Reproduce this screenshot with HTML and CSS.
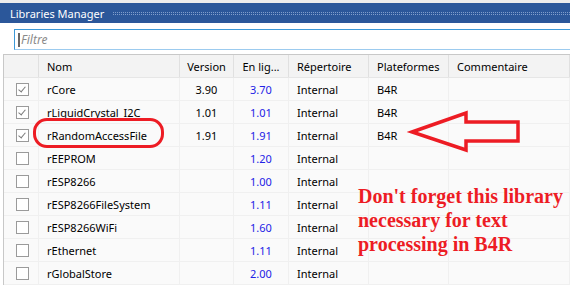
FILE: index.html
```html
<!DOCTYPE html>
<html lang="fr">
<head>
<meta charset="utf-8">
<title>Libraries Manager</title>
<link rel="stylesheet" href="styles.css">
</head>
<body>
<div class="window">
  <div class="titlebar">
    <span class="title">Libraries Manager</span>
    <span class="grip"></span>
  </div>
  <div class="filter-row">
    <div class="filter"><span class="caret"></span><span class="placeholder">Filtre</span></div>
  </div>

  <div class="grid">
    <div class="row head">
      <div class="cell"></div>
      <div class="cell">Nom</div>
      <div class="cell center">Version</div>
      <div class="cell center">En lig...</div>
      <div class="cell">Répertoire</div>
      <div class="cell">Plateformes</div>
      <div class="cell">Commentaire</div>
    </div>
    <div class="row">
      <div class="cell"><span class="box on"></span></div>
      <div class="cell">rCore</div>
      <div class="cell center">3.90</div>
      <div class="cell center online">3.70</div>
      <div class="cell">Internal</div>
      <div class="cell">B4R</div>
      <div class="cell"></div>
    </div>
    <div class="row">
      <div class="cell"><span class="box on"></span></div>
      <div class="cell">rLiquidCrystal_I2C</div>
      <div class="cell center">1.01</div>
      <div class="cell center online">1.01</div>
      <div class="cell">Internal</div>
      <div class="cell">B4R</div>
      <div class="cell"></div>
    </div>
    <div class="row">
      <div class="cell"><span class="box on"></span></div>
      <div class="cell">rRandomAccessFile</div>
      <div class="cell center">1.91</div>
      <div class="cell center online">1.91</div>
      <div class="cell">Internal</div>
      <div class="cell">B4R</div>
      <div class="cell"></div>
    </div>
    <div class="row">
      <div class="cell"><span class="box"></span></div>
      <div class="cell">rEEPROM</div>
      <div class="cell center"></div>
      <div class="cell center online">1.20</div>
      <div class="cell">Internal</div>
      <div class="cell"></div>
      <div class="cell"></div>
    </div>
    <div class="row">
      <div class="cell"><span class="box"></span></div>
      <div class="cell">rESP8266</div>
      <div class="cell center"></div>
      <div class="cell center online">1.00</div>
      <div class="cell">Internal</div>
      <div class="cell"></div>
      <div class="cell"></div>
    </div>
    <div class="row">
      <div class="cell"><span class="box"></span></div>
      <div class="cell">rESP8266FileSystem</div>
      <div class="cell center"></div>
      <div class="cell center online">1.11</div>
      <div class="cell">Internal</div>
      <div class="cell"></div>
      <div class="cell"></div>
    </div>
    <div class="row">
      <div class="cell"><span class="box"></span></div>
      <div class="cell">rESP8266WiFi</div>
      <div class="cell center"></div>
      <div class="cell center online">1.60</div>
      <div class="cell">Internal</div>
      <div class="cell"></div>
      <div class="cell"></div>
    </div>
    <div class="row">
      <div class="cell"><span class="box"></span></div>
      <div class="cell">rEthernet</div>
      <div class="cell center"></div>
      <div class="cell center online">1.11</div>
      <div class="cell">Internal</div>
      <div class="cell"></div>
      <div class="cell"></div>
    </div>
    <div class="row">
      <div class="cell"><span class="box"></span></div>
      <div class="cell">rGlobalStore</div>
      <div class="cell center"></div>
      <div class="cell center online">2.00</div>
      <div class="cell">Internal</div>
      <div class="cell"></div>
      <div class="cell"></div>
    </div>
  </div>

  <!-- annotations drawn over the screenshot -->
  <div class="ring"></div>
  <svg class="arrow" width="130" height="50" viewBox="405 108 130 50">
    <polygon points="412,132 466,113 466,122 518,122 518,141 466,141 466,150" fill="none" stroke="#ed1c24" stroke-width="3.5" stroke-linejoin="miter"/>
  </svg>
  <div class="note">Don't forget this library<br>necessary for text<br>processing in B4R</div>
</div>
</body>
</html>
```

FILE: styles.css
```css
body {
    margin: 0;
    background: #fff;
    font-family: "Noto Sans", "Open Sans", sans-serif;
    font-size: 11px;
    color: #000;
}
.window {
    position: relative;
    width: 570px;
    height: 294px;
    overflow: hidden;
    border-top: 3px solid #ececec;
    box-sizing: border-box;
}
.titlebar {
    height: 20px;
    background: #2b579a;
    display: flex;
    align-items: center;
    padding-left: 10px;
}
.title {
    color: #fff;
    font-size: 11px;
    white-space: nowrap;
}
.grip {
    flex: 1;
    height: 1px;
    margin-left: 9px;
    border-top: 1px dotted #7f9dcb;
    border-bottom: 1px dotted #7f9dcb;
}
.filter-row {
    padding: 6px 0 0 14px;
    box-sizing: border-box;
    height: 31px;
}
.filter {
    height: 21px;
    box-sizing: border-box;
    border: 1px solid #3c99d8;
    border-bottom-color: #9ccbef;
    border-right: none;
    display: flex;
    align-items: center;
    padding-left: 3px;
}
.caret {
    width: 2px;
    height: 14px;
    background: #666;
    margin-right: 1px;
}
.placeholder {
    color: #8a8a8a;
    font-style: italic;
    font-size: 12px;
}
.grid {
    margin-left: 3px;
    border-left: 1px solid #c8c8c8;
    border-top: 1px solid #c8c8c8;
}
.row {
    display: grid;
    grid-template-columns: 35px 141px 54px 55px 80px 80px 1fr;
    height: 23px;
    background: #fafafa;
    border-bottom: 1px solid #f0f0f0;
    box-sizing: border-box;
}
.row.head {
    height: 23px;
    background: #f3f3f3;
    border-bottom: 1px solid #e6e6e6;
}
.cell {
    display: flex;
    align-items: center;
    padding-left: 8px;
    border-right: 1px solid #f0f0f0;
    white-space: nowrap;
    overflow: hidden;
}
.head .cell {
    border-right-color: #e0e0e0;
}
.cell.center {
    justify-content: center;
    padding-left: 0;
}
.online {
    color: #2323e6;
}
.box {
    width: 13px;
    height: 13px;
    box-sizing: border-box;
    border: 1px solid #9a9a9a;
    background: #fff;
    margin-left: 4px;
    position: relative;
}
.box.on::after {
    content: "";
    position: absolute;
    left: 3px;
    top: 1px;
    width: 3px;
    height: 6px;
    border-right: 1.5px solid #7a7a7a;
    border-bottom: 1.5px solid #7a7a7a;
    transform: rotate(40deg);
}
.ring {
    position: absolute;
    left: 33px;
    top: 115px;
    width: 131px;
    height: 30px;
    border: 3px solid #ed1c24;
    border-radius: 14px;
    box-sizing: border-box;
}
.arrow {
    position: absolute;
    left: 405px;
    top: 105px;
}
.note {
    position: absolute;
    left: 358px;
    top: 181px;
    font-family: "Liberation Serif", "Times New Roman", serif;
    font-weight: bold;
    font-size: 20px;
    line-height: 24px;
    color: #ed1c24;
    white-space: nowrap;
}
```
